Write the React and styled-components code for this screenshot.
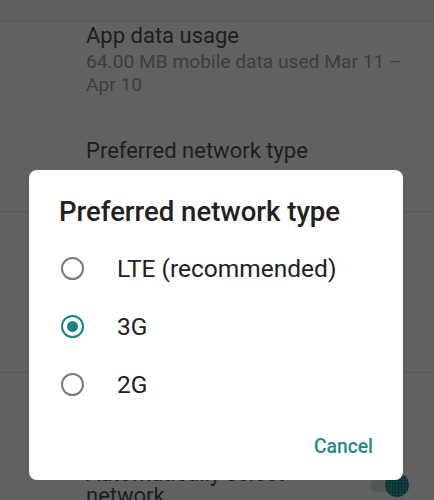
import React from "react";
import styled, { createGlobalStyle } from "styled-components";

const Global = createGlobalStyle`
  html, body { margin: 0; padding: 0; }
  body {
    width: 434px;
    height: 500px;
    overflow: hidden;
    background: #616161;
    font-family: Roboto, "Noto Sans", "Liberation Sans", sans-serif;
  }
`;

const Screen = styled.div`
  position: relative;
  width: 434px;
  height: 500px;
  overflow: hidden;
  background: #616161;
`;

const AppBar = styled.div`
  height: 21px;
  background: #5e5e5e;
  border-bottom: 1px solid #575757;
`;

const Item = styled.div`
  padding: ${(p) => p.$pad || "0"};
  padding-left: 86px;
  padding-right: ${(p) => (p.$toggle ? "70px" : "24px")};
  position: relative;
`;

const ItemTitle = styled.div`
  font-size: 22px;
  line-height: ${(p) => p.$lh || "28px"};
  color: #1d1d1d;
`;

const ItemSub = styled.div`
  font-size: 19.2px;
  line-height: 23px;
  color: #3d3d3d;
  margin-top: ${(p) => p.$gap || 0}px;
`;

const Divider = styled.div`
  height: 1px;
  background: #575757;
  margin-top: ${(p) => p.$top}px;
`;

const Toggle = styled.div`
  position: absolute;
  right: 25px;
  top: 100px;
  width: 39px;
  height: 24px;
`;

const Track = styled.div`
  position: absolute;
  left: 0;
  top: 6px;
  width: 34px;
  height: 13px;
  border-radius: 7px;
  background: #4f5757;
`;

const Thumb = styled.div`
  position: absolute;
  right: 0;
  top: 0;
  width: 24px;
  height: 24px;
  border-radius: 50%;
  background-color: #103e3c;
  background-image: radial-gradient(circle, #061817 0.8px, transparent 1px);
  background-size: 3px 3px;
`;

const Dialog = styled.div`
  position: absolute;
  left: 29px;
  top: 170px;
  width: 374px;
  height: 310px;
  background: #ffffff;
  border-radius: 8px;
  box-sizing: border-box;
  display: flex;
  flex-direction: column;
`;

const DialogTitle = styled.div`
  padding: 25px 30px 0 30px;
  height: 44px;
  font-size: 27.5px;
  font-weight: 500;
  line-height: 34px;
  color: #212121;
  white-space: nowrap;
`;

const Options = styled.div`
  display: flex;
  flex-direction: column;
`;

const Option = styled.label`
  display: flex;
  align-items: center;
  height: 58px;
  padding-left: 32px;
  cursor: pointer;
`;

const Radio = styled.span`
  box-sizing: border-box;
  width: 23px;
  height: 23px;
  border-radius: 50%;
  border: 2.3px solid ${(p) => (p.$checked ? "#1a8582" : "#7a7a7a")};
  display: flex;
  align-items: center;
  justify-content: center;
  flex: none;
  &::after {
    content: "";
    display: ${(p) => (p.$checked ? "block" : "none")};
    width: 11px;
    height: 11px;
    border-radius: 50%;
    background: #1a8582;
  }
`;

const OptionLabel = styled.span`
  margin-left: 33px;
  font-size: 24.5px;
  line-height: 28px;
  color: #212121;
  padding-top: 2px;
`;

const Actions = styled.div`
  display: flex;
  justify-content: flex-end;
  padding: 21px 30px 0 0;
`;

const TextButton = styled.button`
  border: none;
  background: none;
  padding: 0;
  font-family: inherit;
  font-size: 19.3px;
  font-weight: 500;
  line-height: 26px;
  color: #1e8a87;
  cursor: pointer;
`;

const options = [
  { label: "LTE (recommended)", checked: false },
  { label: "3G", checked: true },
  { label: "2G", checked: false },
];

export default function App() {
  return (
    <>
      <Global />
      <Screen>
        <AppBar />
        <Item $pad="0 0 41px 0">
          <ItemTitle>App data usage</ItemTitle>
          <ItemSub>64.00 MB mobile data used Mar 11 – Apr 10</ItemSub>
        </Item>
        <Item>
          <ItemTitle>Preferred network type</ItemTitle>
          <ItemSub $gap={3}>3G</ItemSub>
        </Item>
        <Divider $top={20} />
        <Item $pad="30px 0 0 0">
          <ItemTitle>Carrier</ItemTitle>
          <ItemSub>Automatically select</ItemSub>
        </Item>
        <Divider $top={79} />
        <Item $pad="90px 0 0 0" $toggle>
          <ItemTitle $lh="22px">Automatically select network</ItemTitle>
          <Toggle>
            <Track />
            <Thumb />
          </Toggle>
        </Item>

        <Dialog role="dialog">
          <DialogTitle>Preferred network type</DialogTitle>
          <Options>
            {options.map((o) => (
              <Option key={o.label}>
                <Radio $checked={o.checked} />
                <OptionLabel>{o.label}</OptionLabel>
              </Option>
            ))}
          </Options>
          <Actions>
            <TextButton>Cancel</TextButton>
          </Actions>
        </Dialog>
      </Screen>
    </>
  );
}
